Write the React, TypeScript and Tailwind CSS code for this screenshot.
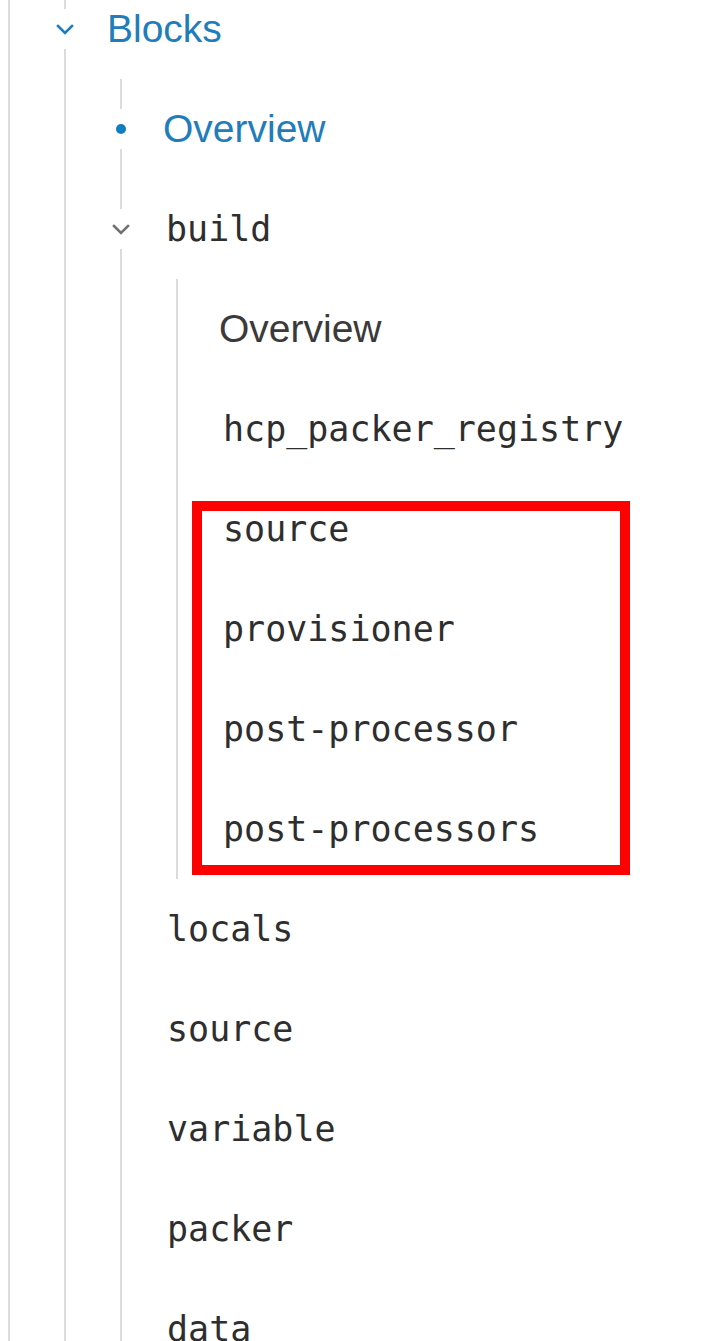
import React from "react";

const mono = "font-['DejaVu_Sans_Mono',monospace] text-[35px] text-[#2e2e2e]";
const sans = "font-['Liberation_Sans',Arial,sans-serif] text-[39px]";

function Chevron({ color }: { color: string }) {
  return (
    <svg width="18" height="11" viewBox="0 0 18 11" fill="none">
      <path d="M2 2 L9 9 L16 2" stroke={color} strokeWidth="2.6" strokeLinecap="square" />
    </svg>
  );
}

function MonoRow({ label, indent = "pl-[45px]" }: { label: string; indent?: string }) {
  return (
    <div className={`h-[100px] flex items-center ${indent}`}>
      <span className={mono}>{label}</span>
    </div>
  );
}

export default function App() {
  return (
    <div className="w-[715px] h-[1341px] overflow-hidden bg-white">
      <div className="-mt-[21px] ml-[8px] border-l-2 border-[#dcdcdc]">
        {/* L1 list: line at x=65 */}
        <div className="ml-[54px] border-l-2 border-[#dcdcdc] pb-[40px]">
          {/* Blocks row */}
          <div className="h-[100px] flex items-center">
            <div className="-ml-[11px] w-[20px] h-[40px] bg-white flex items-center justify-center">
              <Chevron color="#1c7dbd" />
            </div>
            <span className={`${sans} ml-[32px] text-[#1f7dbb]`}>Blocks</span>
          </div>
          {/* L2 list: line at x=121 */}
          <div className="ml-[54px] border-l-2 border-[#dcdcdc]">
            <div className="h-[100px] flex items-center">
              <div className="-ml-[11px] w-[20px] h-[40px] bg-white flex items-center justify-center">
                <span className="block w-[10px] h-[10px] rounded-full bg-[#0f7dbf]" />
              </div>
              <span className={`${sans} ml-[32px] text-[#1f7dbb]`}>Overview</span>
            </div>
            <div className="h-[100px] flex items-center">
              <div className="-ml-[11px] w-[20px] h-[40px] bg-white flex items-center justify-center">
                <Chevron color="#707070" />
              </div>
              <span className={`${mono} ml-[35px]`}>build</span>
            </div>
            {/* L3 list: line at x=177 */}
            <div className="ml-[54px] border-l-2 border-[#dcdcdc]">
              <div className="h-[100px] flex items-center pl-[41px]">
                <span className={`${sans} text-[#3a3a3a]`}>Overview</span>
              </div>
              <MonoRow label="hcp_packer_registry" />
              <div className="relative">
                <MonoRow label="source" />
                <MonoRow label="provisioner" />
                <MonoRow label="post-processor" />
                <MonoRow label="post-processors" />
                <div className="absolute left-[14px] top-[22px] w-[438px] h-[374px] border-[10px] border-[#ff0000]" />
              </div>
            </div>
            <MonoRow label="locals" />
            <MonoRow label="source" />
            <MonoRow label="variable" />
            <MonoRow label="packer" />
            <MonoRow label="data" />
          </div>
        </div>
      </div>
    </div>
  );
}
